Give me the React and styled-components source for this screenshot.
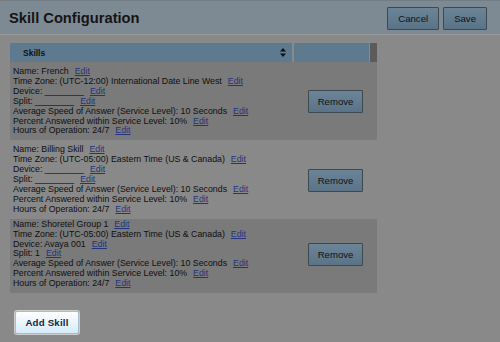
import React from "react";
import styled, { createGlobalStyle } from "styled-components";

const GlobalStyle = createGlobalStyle`
    html, body {
        margin: 0;
        padding: 0;
        background-color: #898989;
    }
    body {
        width: 500px;
        height: 342px;
        overflow: hidden;
        font-family: "Liberation Sans", Arial, sans-serif;
        color: #0f0f0f;
    }
`;

const Page = styled.div`
    width: 500px;
    height: 342px;
    display: flex;
    flex-direction: column;
`;

const TitleBar = styled.div`
    height: 33px;
    display: flex;
    align-items: center;
    justify-content: space-between;
    padding: 0 13px 0 9px;
    background-color: #7e8a93;
    border-top: 1px solid #737d86;
    border-bottom: 1px solid #9b9b9b;
`;

const Title = styled.h1`
    margin: 0;
    font-size: 14.7px;
    font-weight: bold;
    color: #141414;
`;

const Actions = styled.div`
    display: flex;
    gap: 4px;
    margin-top: 1px;
`;

const DimButton = styled.button`
    height: 23px;
    padding: 0 ${(p) => p.$pad || 10}px;
    font-family: "Liberation Sans", Arial, sans-serif;
    font-size: 9.6px;
    color: #111;
    background: linear-gradient(#6c8498, #5a7387);
    border: 1px solid #3e4850;
    border-radius: 1px;
    cursor: pointer;
`;

const Content = styled.div`
    padding: 8px 0 0 10px;
`;

const Table = styled.div`
    width: 367px;
`;

const HeadRow = styled.div`
    display: flex;
    height: 19px;
`;

const HeadCell = styled.div`
    width: ${(p) => p.$w}px;
    margin-right: ${(p) => p.$gap || 0}px;
    display: flex;
    align-items: center;
    justify-content: space-between;
    padding: 0 ${(p) => (p.$label ? "6px 0 13px" : "0")};
    box-sizing: border-box;
    background-color: ${(p) => p.$bg || "#5e7a8f"};
    font-size: 8.5px;
    font-weight: bold;
    color: #111;
`;

const Row = styled.div`
    display: grid;
    grid-template-columns: 282px 1fr;
    column-gap: 2px;
    padding: ${(p) => p.$pad};
    background-color: ${(p) => (p.$dark ? "#7a7a7a" : "#898989")};
`;

const Details = styled.div`
    padding-left: 3px;
    font-size: 8.8px;
    line-height: 9.9px;
    white-space: nowrap;
`;

const Line = styled.div``;

const EditLink = styled.a`
    margin-left: 6px;
    color: #24347c;
    text-decoration: underline;
    cursor: pointer;
`;

const Side = styled.div`
    display: flex;
    align-items: center;
    justify-content: center;
`;

const AddButton = styled.button`
    margin: 18px 0 0 5px;
    width: 64px;
    height: 23px;
    padding: 0;
    font-family: "Liberation Sans", Arial, sans-serif;
    font-size: 9.7px;
    font-weight: bold;
    letter-spacing: 0.2px;
    color: #15263a;
    background: linear-gradient(#ffffff, #d5ebfa);
    border: 1px solid #a8bccb;
    border-radius: 2px;
    box-shadow: 0 0 0 1px #cdcdcd;
    cursor: pointer;
`;

const SortIcon = () => (
    <svg width="6" height="9" viewBox="0 0 6 9">
        <path d="M3 0 L6 3.5 L0 3.5 Z M3 9 L6 5.5 L0 5.5 Z" fill="#111" />
    </svg>
);

const skills = [
    {
        name: "French",
        zone: "(UTC-12:00) International Date Line West",
        device: "________",
        split: "________",
        pad: "5px 0 4px",
        dark: true,
    },
    {
        name: "Billing Skill",
        zone: "(UTC-05:00) Eastern Time (US & Canada)",
        device: "________",
        split: "________",
        pad: "5px 0 4px",
        dark: false,
    },
    {
        name: "Shoretel Group 1",
        zone: "(UTC-05:00) Eastern Time (US & Canada)",
        device: "Avaya 001",
        split: "1",
        pad: "1px 0 4px",
        dark: true,
    },
];

const Field = ({ label, value }) => (
    <Line>
        {label}: {value}
        <EditLink>Edit</EditLink>
    </Line>
);

const App = () => {
    return (
        <Page>
            <GlobalStyle />
            <TitleBar>
                <Title>Skill Configuration</Title>
                <Actions>
                    <DimButton>Cancel</DimButton>
                    <DimButton>Save</DimButton>
                </Actions>
            </TitleBar>
            <Content>
                <Table>
                    <HeadRow>
                        <HeadCell $w={282} $gap={2} $label>
                            Skills
                            <SortIcon />
                        </HeadCell>
                        <HeadCell $w={75} $gap={1} />
                        <HeadCell $w={7} $bg="#5b5b5b" />
                    </HeadRow>
                    {skills.map((s) => (
                        <Row key={s.name} $dark={s.dark} $pad={s.pad}>
                            <Details>
                                <Field label="Name" value={s.name} />
                                <Field label="Time Zone" value={s.zone} />
                                <Field label="Device" value={s.device} />
                                <Field label="Split" value={s.split} />
                                <Field label="Average Speed of Answer (Service Level)" value="10 Seconds" />
                                <Field label="Percent Answered within Service Level" value="10%" />
                                <Field label="Hours of Operation" value="24/7" />
                            </Details>
                            <Side>
                                <DimButton $pad={9}>Remove</DimButton>
                            </Side>
                        </Row>
                    ))}
                </Table>
                <AddButton>Add Skill</AddButton>
            </Content>
        </Page>
    );
};

export default App;
